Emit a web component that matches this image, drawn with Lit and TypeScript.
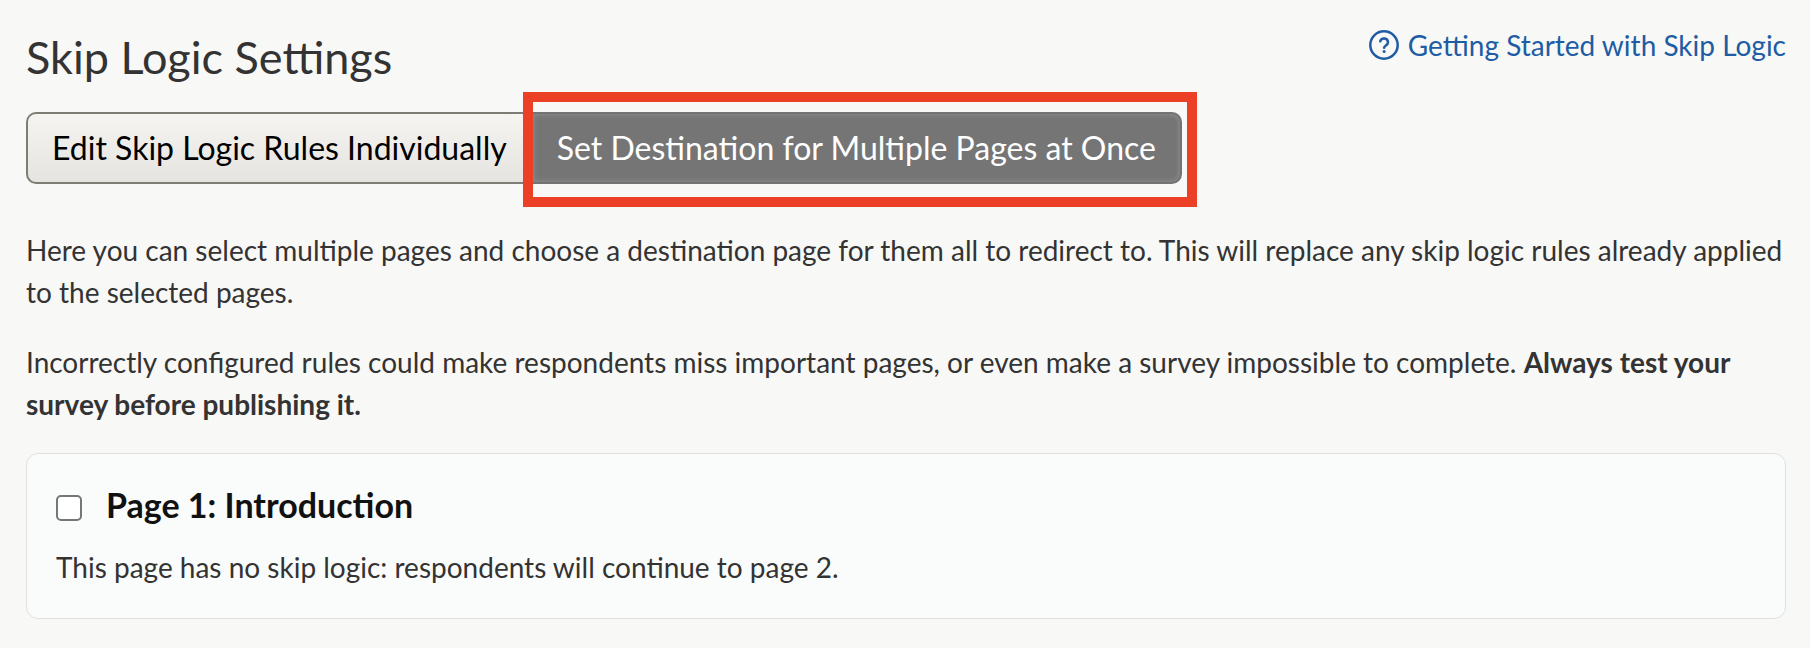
import { LitElement, html, css } from "lit";
import { customElement } from "lit/decorators.js";

@customElement("app-root")
export class AppRoot extends LitElement {
  static styles = css`
    * { box-sizing: border-box; }
    :host {
      box-sizing: border-box;
      display: block;
      min-height: 100vh;
      padding: 28px 24px 28px 26px;
      background: #f8f8f6;
      color: #333;
      font: 28px/42px Lato, "Liberation Sans", sans-serif;
    }
    .top { display: flex; justify-content: space-between; align-items: flex-start; }
    h1 { margin: 0; font-size: 45px; line-height: 58px; font-weight: 400; }
    .help { display: flex; align-items: center; gap: 8px; color: #205ca4; text-decoration: none; line-height: 34px; }
    .help svg { width: 32px; height: 32px; }
    .tabs { display: flex; width: fit-content; margin-top: 26px; }
    .tab {
      height: 72px;
      padding: 0 24px;
      border: 2px solid #7d7d75;
      border-right: 0;
      border-radius: 10px 0 0 10px;
      background: linear-gradient(#f5f4f1, #e6e4e0);
      color: #000;
      font: inherit;
      font-size: 32px;
    }
    .tab.selected {
      border: 2px solid #737373;
      border-radius: 0 10px 10px 0;
      background: #757575;
      box-shadow: inset 0 0 4px 1px #8c8c8c;
      color: #fff;
    }
    .highlight { position: relative; display: flex; }
    .highlight::after {
      content: "";
      position: absolute;
      inset: -20px -15px -23px -8px;
      border: 10px solid #eb4026;
      pointer-events: none;
    }
    p { margin: 0 0 28px; }
    .intro { margin-top: 45px; }
    .card { padding: 30px 29px; border: 1px solid #dfe0e2; border-radius: 12px; background: #fafbfb; }
    .row { display: flex; align-items: center; gap: 24px; color: #111; font-size: 34px; font-weight: 700; }
    .row input {
      appearance: none;
      width: 26px;
      height: 26px;
      margin: 6px 0 0;
      border: 2px solid #767676;
      border-radius: 5px;
      background: #fff;
    }
    .row input:checked { background: #205ca4; }
    .card p { margin: 20px 0 0; }
  `;

  render() {
    return html`
      <header class="top">
        <h1>Skip Logic Settings</h1>
        <a class="help" href="#help">
          <svg viewBox="0 0 32 32" fill="none" stroke="currentColor" stroke-width="2.5" stroke-linecap="round" stroke-linejoin="round" aria-hidden="true">
            <circle cx="16" cy="16" r="13.7" />
            <path d="M12.2 12.3a4 4 0 0 1 7.8 1.2c0 2.6-3.9 3.2-3.9 5.2" />
            <circle cx="16.1" cy="22.6" r="1.5" fill="currentColor" stroke="none" />
          </svg>
          <span>Getting Started with Skip Logic</span>
        </a>
      </header>
      <div class="tabs">
        <button class="tab" type="button" aria-pressed="false">Edit Skip Logic Rules Individually</button>
        <div class="highlight">
          <button class="tab selected" type="button" aria-pressed="true">Set Destination for Multiple Pages at Once</button>
        </div>
      </div>
      <p class="intro">Here you can select multiple pages and choose a destination page for them all to redirect to. This will replace any skip logic rules already applied to the selected pages.</p>
      <p>Incorrectly configured rules could make respondents miss important pages, or even make a survey impossible to complete. <strong>Always test your survey before publishing it.</strong></p>
      <section class="card">
        <div class="row"><input type="checkbox" id="page-1" /><label for="page-1">Page 1: Introduction</label></div>
        <p>This page has no skip logic: respondents will continue to page 2.</p>
      </section>
    `;
  }
}
